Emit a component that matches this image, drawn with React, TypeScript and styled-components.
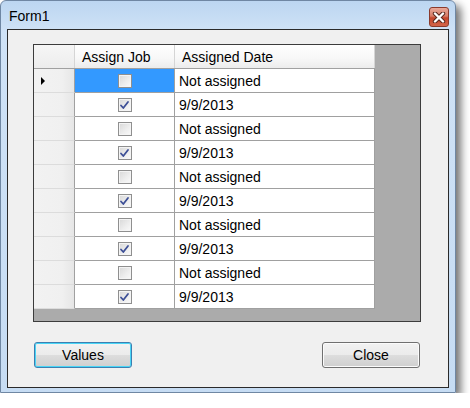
import styled, { createGlobalStyle } from 'styled-components';

interface IJob {
  id: number;
  assigned: boolean;
  date: string;
}

const jobs: IJob[] = Array.from({ length: 10 }, (_, i) => ({
  id: i,
  assigned: i % 2 === 1,
  date: i % 2 === 1 ? '9/9/2013' : 'Not assigned',
}));

const CheckBox = ({ checked }: { checked: boolean }) => (
  <Box>
    {checked && (
      <svg width='11' height='11' viewBox='0 0 11 11'>
        <path d='M2 5.5 L4.3 8 L9 2' fill='none' stroke='#3d4f96' strokeWidth='1.8' strokeLinecap='round' strokeLinejoin='round' />
      </svg>
    )}
  </Box>
);

const App = () => {
  return (
    <>
      <GlobalStyle />
      <Window>
        <TitleBar>
          <Title>Form1</Title>
          <CloseButton aria-label='Close'>
            <svg width='14' height='11' viewBox='0 0 14 11'>
              <path
                d='M3 1.5 L11 9.5 M11 1.5 L3 9.5'
                stroke='#5a2a20'
                strokeWidth='4.4'
                strokeLinecap='round'
              />
              <path d='M3 1.5 L11 9.5 M11 1.5 L3 9.5' stroke='#ffffff' strokeWidth='2.4' strokeLinecap='round' />
            </svg>
          </CloseButton>
        </TitleBar>
        <Client>
          <Grid>
            <Table>
              <HeaderRow>
                <CornerCell />
                <HeaderCell width={100}>Assign Job</HeaderCell>
                <HeaderCell width={200}>Assigned Date</HeaderCell>
              </HeaderRow>
              {jobs.map(({ id, assigned, date }) => (
                <Row key={id}>
                  <RowHeader>{id === 0 && <Arrow />}</RowHeader>
                  <CheckCell selected={id === 0}>
                    <CheckBox checked={assigned} />
                  </CheckCell>
                  <DateCell>{date}</DateCell>
                </Row>
              ))}
            </Table>
          </Grid>
          <ButtonRow>
            <Button focused>Values</Button>
            <Button>Close</Button>
          </ButtonRow>
        </Client>
      </Window>
    </>
  );
};

const GlobalStyle = createGlobalStyle`
  body {
    margin: 0;
    background: #ffffff;
    font-family: 'Liberation Sans', Arial, sans-serif;
  }
`;

const Window = styled.div`
  width: 456px;
  box-sizing: border-box;
  border: 1px solid #6f87a3;
  border-radius: 6px 6px 0 0;
  background: linear-gradient(to bottom, #bcd6f1 0px, #cfe2f6 30px, #c6dcf3 100%);
  box-shadow: 5px 5px 8px rgba(0, 0, 0, 0.55);
  padding: 0 6px 4px 6px;
`;

const TitleBar = styled.div`
  height: 28px;
  display: flex;
  align-items: flex-start;
  justify-content: space-between;
`;

const Title = styled.span`
  font-size: 14px;
  color: #000;
  margin: 7px 0 0 2px;
`;

const CloseButton = styled.button`
  margin: 6px 0 0 0;
  width: 20px;
  height: 20px;
  padding: 0;
  display: flex;
  align-items: center;
  justify-content: center;
  border: 1px solid #8a3a2c;
  border-radius: 3px;
  background: linear-gradient(to bottom, #e9a99a 0%, #d77c66 45%, #c5452b 55%, #d2654a 100%);
`;

const Client = styled.div`
  border: 1px solid #2a2a2a;
  background: #f0f0f0;
  padding: 14px 27px 19px 25px;
  display: flex;
  flex-direction: column;
  gap: 20px;
`;

const Grid = styled.div`
  width: 388px;
  height: 278px;
  box-sizing: border-box;
  border: 1px solid #3c3c3c;
  background: #ababab;
`;

const Table = styled.div`
  width: 341px;
  display: flex;
  flex-direction: column;
`;

const HeaderRow = styled.div`
  display: flex;
  height: 24px;
  background: linear-gradient(to bottom, #ffffff 0%, #f7f7f7 60%, #ececec 100%);
  border-bottom: 1px solid #a0a0a0;
  box-sizing: border-box;
`;

const CornerCell = styled.div`
  width: 41px;
  box-sizing: border-box;
  border-right: 1px solid #d5d5d5;
  background: linear-gradient(to bottom, #f6f6f6, #ececec);
`;

const HeaderCell = styled.div<{ width: number }>`
  width: ${({ width }) => width}px;
  box-sizing: border-box;
  border-right: 1px solid #d5d5d5;
  padding: 0 0 0 7px;
  font-size: 14px;
  line-height: 25px;
  color: #000;
`;

const Row = styled.div`
  display: flex;
  height: 24px;
`;

const RowHeader = styled.div`
  width: 41px;
  box-sizing: border-box;
  border-right: 1px solid #a0a0a0;
  border-bottom: 1px solid #dcdcdc;
  background: linear-gradient(to right, #f2f2f2 0%, #f0f0f0 70%, #e6e6e6 100%);
  display: flex;
  align-items: center;
  padding: 1px 0 0 7px;
`;

const Arrow = styled.span`
  width: 0;
  height: 0;
  border-top: 4px solid transparent;
  border-bottom: 4px solid transparent;
  border-left: 4px solid #000;
`;

const CheckCell = styled.div<{ selected?: boolean }>`
  width: 100px;
  box-sizing: border-box;
  border-right: 1px solid #a0a0a0;
  border-bottom: 1px solid #a0a0a0;
  background: ${({ selected }) => (selected ? '#3399ff' : '#ffffff')};
  display: flex;
  align-items: center;
  justify-content: center;
  padding-top: 1px;
`;

const Box = styled.span`
  width: 14px;
  height: 14px;
  box-sizing: border-box;
  border: 1px solid #8f8f8f;
  background: linear-gradient(135deg, #d8d8d8 0%, #eeeeee 60%, #fafafa 100%);
  box-shadow: inset 0 0 0 1px #f4f4f4;
  display: flex;
  align-items: center;
  justify-content: center;
`;

const DateCell = styled.div`
  width: 200px;
  box-sizing: border-box;
  border-right: 1px solid #a0a0a0;
  border-bottom: 1px solid #a0a0a0;
  background: #ffffff;
  padding-left: 4px;
  font-size: 14px;
  line-height: 25px;
  color: #000;
`;

const ButtonRow = styled.div`
  width: 388px;
  display: flex;
  justify-content: space-between;
  padding: 0 1px;
  box-sizing: border-box;
`;

const Button = styled.button<{ focused?: boolean }>`
  width: 98px;
  height: 26px;
  font-family: 'Liberation Sans', Arial, sans-serif;
  font-size: 14px;
  color: #000;
  border-radius: 3px;
  border: 1px solid ${({ focused }) => (focused ? '#3c7fb1' : '#707070')};
  box-shadow: inset 0 0 0 1px ${({ focused }) => (focused ? '#48d5f6' : '#fbfbfb')};
  background: linear-gradient(to bottom, #f2f2f2 0%, #ebebeb 50%, #dddddd 51%, #cfcfcf 100%);
  padding: 0;
`;

export default App;
